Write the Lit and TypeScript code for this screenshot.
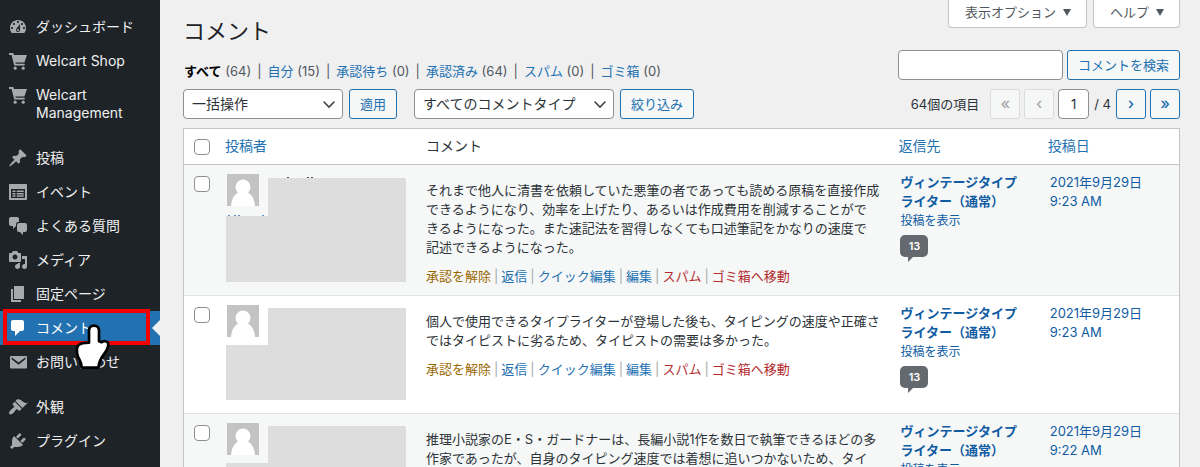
import { LitElement, html, css, svg, nothing } from "lit";
import { customElement } from "lit/decorators.js";
import { classMap } from "lit/directives/class-map.js";
import { styleMap } from "lit/directives/style-map.js";

interface MenuItem {
  label: string;
  icon: string;
  current?: boolean;
  gapBefore?: boolean;
}

interface CommentRow {
  lines: string[];
  time: string;
  maskTop: number;
  maskStep: number;
  maskBottom: number;
  traces?: boolean;
}

const ICONS: Record<string, unknown> = {
  dashboard: svg`<path d="M3.76 16h12.48c1.1-1.37 1.76-3.11 1.76-5 0-4.42-3.58-8-8-8s-8 3.58-8 8c0 1.89.66 3.63 1.76 5zM10 4c.55 0 1 .45 1 1s-.45 1-1 1-1-.45-1-1 .45-1 1-1zM6 6c.55 0 1 .45 1 1s-.45 1-1 1-1-.45-1-1 .45-1 1-1zm8 0c.55 0 1 .45 1 1s-.45 1-1 1-1-.45-1-1 .45-1 1-1zm-5.37 5.55L12 7v6c0 1.1-.9 2-2 2s-2-.9-2-2c0-.57.24-1.08.63-1.45zM4 10c.55 0 1 .45 1 1s-.45 1-1 1-1-.45-1-1 .45-1 1-1zm12 0c.55 0 1 .45 1 1s-.45 1-1 1-1-.45-1-1 .45-1 1-1zm-5 3c0-.55-.45-1-1-1s-1 .45-1 1 .45 1 1 1 1-.45 1-1z"/>`,
  cart: svg`<path d="M1 2h4.300l.6 2H19l-2.600 7.600H7.400l.3 1.100h9v1.700H6.200L3.600 3.900H1z"/><circle cx="7.200" cy="17.200" r="1.600"/><circle cx="15.200" cy="17.200" r="1.600"/>`,
  post: svg`<path d="M10.44 3.02l1.82-1.82 6.36 6.35-1.83 1.82c-1.05-.68-2.48-.57-3.41.36l-.75.75c-.92.93-1.04 2.35-.35 3.41l-1.83 1.82-2.41-2.41-2.8 2.79c-.42.42-3.38 2.71-3.8 2.29s1.86-3.39 2.28-3.81l2.79-2.79L4.1 9.36l1.83-1.82c1.05.69 2.48.57 3.4-.36l.75-.75c.93-.92 1.05-2.35.36-3.41z"/>`,
  event: svg`<path fill-rule="evenodd" d="M2 2h16c.6 0 1 .4 1 1v14c0 .6-.4 1-1 1H2c-.6 0-1-.4-1-1V3c0-.6.4-1 1-1zm1 5v9h14V7zm1.500 1.500h3v1.600h-3zm4.200 0h7v1.600h-7zm-4.200 2.400h3v1.600h-3zm4.200 0h7v1.600h-7zm-4.200 2.400h3v1.500h-3zm4.200 0h7v1.500h-7z"/>`,
  chat: svg`<path d="M11 6h-.82C9.07 6 8 7.2 8 8.16V10l-3 3v-3H3c-1.1 0-2-.9-2-2V3c0-1.1.9-2 2-2h6c1.1 0 2 .9 2 2v3zm0 1h6c1.1 0 2 .9 2 2v5c0 1.1-.9 2-2 2h-2v3l-3-3h-1c-1.1 0-2-.9-2-2V9c0-1.1.9-2 2-2z"/>`,
  media: svg`<path d="M13 11V4c0-.55-.45-1-1-1h-1.670L9 1H5L3.670 3H2c-.55 0-1 .45-1 1v7c0 .55.45 1 1 1h10c.55 0 1-.45 1-1zM7 4.500c1.380 0 2.500 1.120 2.500 2.500S8.380 9.500 7 9.500 4.500 8.380 4.500 7 5.620 4.500 7 4.500zM14 6h5v10.500c0 1.380-1.120 2.500-2.500 2.500S14 17.880 14 16.500s1.120-2.500 2.500-2.500c.17 0 .34.02.5.05V9h-3V6zm-4 8.050V13h2v3.500c0 1.380-1.120 2.500-2.500 2.500S7 17.880 7 16.500 8.120 14 9.500 14c.17 0 .34.02.5.05z"/>`,
  page: svg`<path d="M6 15V2h10v13H6zm-1 1h8v2H3V5h2v11z"/>`,
  comment: svg`<path d="M5 2h9c1.100 0 2 .9 2 2v7c0 1.100-.9 2-2 2h-2l-5 5v-5H5c-1.100 0-2-.9-2-2V4c0-1.100.9-2 2-2z"/>`,
  mail: svg`<path fill-rule="evenodd" d="M3 4h15c.6 0 1 .4 1 1v10.500c0 .6-.4 1-1 1H3c-.6 0-1-.4-1-1V5c0-.6.4-1 1-1zm.6 1.300v1.900l6.900 5.600 6.900-5.600V5.300l-6.900 5.300z"/>`,
  appearance: svg`<path d="M14.480 11.060L7.410 3.990l1.500-1.500c.5-.56 2.300-.47 3.510.32 1.210.8 1.430 1.280 2.910 2.100 1.180.64 2.450 1.260 4.450.85zm-.71.71L6.700 4.700 4.930 6.470c-.39.39-.39 1.020 0 1.410l1.060 1.060c.39.39.39 1.030 0 1.420-.6.6-1.430 1.110-2.210 1.690-.35.26-.7.53-1.010.84C1.430 14.230.4 16.080 1.400 17.070c.99 1 2.840-.03 4.180-1.360.31-.31.58-.66.85-1.020.57-.78 1.080-1.610 1.690-2.210.39-.39 1.020-.39 1.410 0l1.060 1.060c.39.39 1.020.39 1.410 0z"/>`,
  plugins: svg`<path d="M13.110 4.360L9.870 7.600 8 5.730l3.240-3.240c.35-.34 1.050-.2 1.560.32.52.51.66 1.210.31 1.550zm-8 1.770l.91-1.120 9.010 9.010-1.190.84c-.71.71-2.630 1.160-3.820 1.160H6.140L4.900 17.260c-.59.59-1.540.59-2.120 0-.59-.58-.59-1.530 0-2.120l1.240-1.240v-3.880c0-1.130.4-3.190 1.090-3.890zm7.260 3.970l3.240-3.240c.34-.35 1.040-.21 1.550.31.52.51.66 1.210.31 1.550l-3.240 3.250z"/>`,
};

const MENU: MenuItem[] = [
  { label: "ダッシュボード", icon: "dashboard" },
  { label: "Welcart Shop", icon: "cart" },
  { label: "Welcart Management", icon: "cart" },
  { label: "投稿", icon: "post", gapBefore: true },
  { label: "イベント", icon: "event" },
  { label: "よくある質問", icon: "chat" },
  { label: "メディア", icon: "media" },
  { label: "固定ページ", icon: "page" },
  { label: "コメント", icon: "comment", current: true },
  { label: "お問い合わせ", icon: "mail" },
  { label: "外観", icon: "appearance", gapBefore: true },
  { label: "プラグイン", icon: "plugins" },
];

const VIEWS: [string, number][] = [
  ["すべて", 64],
  ["自分", 15],
  ["承認待ち", 0],
  ["承認済み", 64],
  ["スパム", 0],
  ["ゴミ箱", 0],
];

const ACTIONS: [string, string][] = [
  ["承認を解除", "unapprove"],
  ["返信", ""],
  ["クイック編集", ""],
  ["編集", ""],
  ["スパム", "danger"],
  ["ゴミ箱へ移動", "danger"],
];

const COMMENTS: CommentRow[] = [
  {
    lines: [
      "それまで他人に清書を依頼していた悪筆の者であっても読める原稿を直接作成",
      "できるようになり、効率を上げたり、あるいは作成費用を削減することがで",
      "きるようになった。また速記法を習得しなくても口述筆記をかなりの速度で",
      "記述できるようになった。",
    ],
    time: "9:23 AM",
    maskTop: 4,
    maskStep: 42,
    maskBottom: 66,
    traces: true,
  },
  {
    lines: [
      "個人で使用できるタイプライターが登場した後も、タイピングの速度や正確さ",
      "ではタイピストに劣るため、タイピストの需要は多かった。",
    ],
    time: "9:23 AM",
    maskTop: 3,
    maskStep: 40,
    maskBottom: 55,
  },
  {
    lines: [
      "推理小説家のE・S・ガードナーは、長編小説1作を数日で執筆できるほどの多",
      "作家であったが、自身のタイピング速度では着想に追いつかないため、タイ",
    ],
    time: "9:22 AM",
    maskTop: 3,
    maskStep: 40,
    maskBottom: 55,
  },
];

@customElement("admin-menu")
export class AdminMenu extends LitElement {
  static styles = css`
    :host {
      display: block;
      flex: none;
      width: 160px;
      background: #1d2327;
    }
    ul {
      list-style: none;
      margin: 0;
      padding: 10px 0 0;
    }
    li {
      position: relative;
    }
    .gap {
      margin-top: 11px;
    }
    a {
      display: flex;
      color: #f0f0f1;
      text-decoration: none;
      font-size: 14px;
      line-height: 18px;
    }
    .icon {
      flex: none;
      width: 20px;
      height: 20px;
      margin: 7px 8px;
      fill: #a7aaad;
    }
    .label {
      padding: 8px 8px 8px 0;
    }
    .current a {
      background: #2271b1;
      color: #fff;
    }
    .current .icon {
      fill: #fff;
    }
    .current::after {
      content: "";
      position: absolute;
      right: 0;
      top: 9px;
      border: 8px solid transparent;
      border-right-color: #f0f0f1;
      border-left-width: 0;
    }
    .marker {
      position: absolute;
      z-index: 1;
      left: 3px;
      right: 10px;
      top: -2px;
      bottom: 0;
      border: 4px solid #f40000;
    }
    .hand {
      position: absolute;
      z-index: 2;
      left: 75px;
      top: 12px;
      width: 36px;
      height: 47px;
    }
  `;

  render() {
    return html`<nav>
      <ul>
        ${MENU.map(
          (item) => html`<li class=${classMap({ current: !!item.current, gap: !!item.gapBefore })}>
            <a href="#">
              <svg class="icon" viewBox="0 0 20 20" aria-hidden="true">${ICONS[item.icon]}</svg>
              <span class="label">${item.label}</span>
            </a>
            ${item.current
              ? html`<span class="marker"></span>
                  <svg class="hand" viewBox="225 69 108 141" aria-hidden="true">
                    <path
                      fill="#fff"
                      stroke="#000"
                      stroke-width="8"
                      stroke-linejoin="round"
                      d="M267 91C267 72 297 72 297 91V124L305 127C309 121 324 123 325 132C325 142 318 155 310 165C300 178 297 187 296 198C296 201 294 203 291 203H249C246 203 244 201 244 198C245 185 237 180 233 167C230 155 229 143 235 136C243 129 255 128 267 128Z"
                    />
                  </svg>`
              : nothing}
          </li>`
        )}
      </ul>
    </nav>`;
  }
}

@customElement("comments-screen")
export class CommentsScreen extends LitElement {
  static styles = css`
    :host {
      display: block;
      flex: 1;
      min-width: 0;
      padding: 0 20px 0 23px;
      background: #f0f0f1;
      color: #2c3338;
      font-size: 13px;
      line-height: 19px;
    }
    a {
      color: #2271b1;
      text-decoration: none;
    }
    button,
    input,
    select {
      box-sizing: border-box;
      margin: 0;
      font: inherit;
    }
    .head,
    .bar,
    .tabs,
    .group,
    .pages {
      display: flex;
    }
    .head,
    .bar {
      justify-content: space-between;
      align-items: flex-start;
    }
    .head {
      height: 50px;
    }
    h1 {
      margin: 0;
      padding-top: 16px;
      font-size: 22px;
      line-height: 30px;
      font-weight: 400;
      color: #1d2327;
    }
    .tabs {
      gap: 6px;
    }
    .tab {
      display: flex;
      align-items: center;
      gap: 7px;
      height: 28px;
      padding: 0 15px 2px 16px;
      border: 1px solid #c3c4c7;
      border-top: 0;
      border-radius: 0 0 4px 4px;
      background: #fff;
      color: #50575e;
    }
    .caret {
      width: 8px;
      height: 7px;
      fill: #50575e;
    }
    .bar {
      height: 30px;
      margin-bottom: 9px;
    }
    .views {
      display: flex;
      list-style: none;
      margin: 0;
      padding: 12px 0 0 1px;
      color: #50575e;
    }
    .views li + li::before {
      content: "|";
      padding: 0 6px;
    }
    .views .all {
      color: #000;
      font-weight: 700;
    }
    .group {
      gap: 6px;
    }
    .group + .group {
      margin-left: 17px;
    }
    .filters {
      display: flex;
    }
    .search {
      display: flex;
      gap: 4px;
    }
    .field {
      height: 30px;
      border: 1px solid #8c8f94;
      border-radius: 4px;
      background: #fff;
      color: #2c3338;
    }
    .query {
      width: 165px;
      padding: 0 8px;
    }
    .btn {
      height: 30px;
      padding: 0 10px;
      border: 1px solid #2271b1;
      border-radius: 3px;
      background: #f6f7f7;
      color: #2271b1;
      white-space: nowrap;
    }
    .picker {
      display: grid;
      align-items: center;
    }
    .picker > * {
      grid-area: 1 / 1;
    }
    .picker select {
      appearance: none;
      padding: 0 24px 2px 8px;
      font-size: 14px;
    }
    .bulk select {
      width: 160px;
    }
    .kind select {
      width: 200px;
    }
    .chevron {
      justify-self: end;
      width: 12px;
      height: 8px;
      margin: 1px 8px 0 0;
      fill: none;
      stroke: #3c434a;
      stroke-width: 1.6;
      stroke-linecap: round;
      pointer-events: none;
    }
    .pages {
      align-items: center;
      gap: 4px;
    }
    .total {
      margin-right: 7px;
    }
    .step {
      width: 30px;
      padding: 0 0 2px;
      font-size: 16px;
      font-weight: 500;
    }
    .step:disabled {
      border-color: #dcdcde;
      color: #a7aaad;
    }
    .page {
      width: 31px;
      padding: 0;
      text-align: center;
    }
    .of {
      padding: 0 1px;
    }
    table {
      width: 100%;
      table-layout: fixed;
      border: 1px solid #c3c4c7;
      border-spacing: 0;
      background: #fff;
    }
    th {
      padding: 7px 8px 9px;
      text-align: left;
      font-weight: 400;
      font-size: 14px;
      border-bottom: 1px solid #c3c4c7;
    }
    td {
      padding: 8px 10px 7px;
      vertical-align: top;
    }
    tbody tr:nth-child(odd) {
      background: #f6f7f7;
    }
    tbody tr + tr td {
      border-top: 1px solid #e1e2e3;
    }
    .c-check {
      width: 33px;
      box-sizing: border-box;
      padding-left: 10px;
      padding-right: 0;
    }
    .c-author {
      width: 20%;
      box-sizing: border-box;
    }
    .c-comment {
      padding-left: 10px;
      padding-right: 0;
    }
    .c-reply {
      width: 15%;
      box-sizing: border-box;
    }
    .c-date {
      width: 14%;
      box-sizing: border-box;
    }
    .check {
      display: block;
      appearance: none;
      width: 16px;
      height: 16px;
      margin-top: 3px;
      border: 1px solid #8c8f94;
      border-radius: 4px;
      background: #fff;
    }
    .who {
      display: grid;
      grid-template-columns: 42px 1fr;
      margin: 1px 0 6px -1px;
    }
    .avatar {
      width: 32px;
      height: 32px;
      margin-left: 1px;
    }
    .mask {
      position: relative;
      background: #ddd;
    }
    .mask.low {
      grid-column: 1 / 3;
    }
    .traced .mask::before {
      content: "";
      position: absolute;
      top: -1px;
      left: 19px;
      width: 2px;
      height: 1px;
      color: #50575e;
      background: currentColor;
      box-shadow: 20px 0, 24px 0;
    }
    .traced .low::before {
      left: 2px;
      color: #5c93c2;
      box-shadow: 6px 0, 10px 0, 34px 0;
    }
    .text {
      margin: 8px 0 10px;
      white-space: nowrap;
    }
    .actions {
      color: #a7aaad;
      white-space: nowrap;
    }
    .actions a + a::before {
      content: "|";
      padding: 0 3px;
      color: #a7aaad;
    }
    .unapprove {
      color: #996800;
    }
    .danger {
      color: #b32d2e;
    }
    .c-reply a,
    .c-date a {
      color: #0f5ca3;
    }
    th a,
    th.c-reply a,
    th.c-date a {
      color: #2271b1;
    }
    .target {
      display: block;
      font-weight: 700;
    }
    .show {
      display: block;
      font-size: 12px;
    }
    .bubble {
      display: block;
      position: relative;
      width: 28px;
      margin-top: 5px;
      border-radius: 5px;
      background: #646970;
      font-size: 11px;
      font-weight: 600;
      line-height: 22px;
      text-align: center;
    }
    .c-reply .bubble {
      color: #fff;
    }
    .bubble::after {
      content: "";
      position: absolute;
      left: 8px;
      top: 22px;
      border-top: 5px solid #646970;
      border-right: 5px solid transparent;
    }
  `;

  private row(c: CommentRow, i: number) {
    return html`<tr>
      <td class="c-check"><input class="check" type="checkbox" aria-label=${`コメント ${i + 1} を選択`} /></td>
      <td class="c-author">
        <div
          class=${classMap({ who: true, traced: !!c.traces })}
          style=${styleMap({ gridTemplateRows: `${c.maskStep}px ${c.maskBottom}px` })}
        >
          <svg class="avatar" viewBox="0 0 32 32" aria-hidden="true">
            <path fill="#c3c3c3" d="M0 0h32v32H0z" />
            <circle cx="16" cy="13" r="7.500" fill="#fff" />
            <path fill="#fff" d="M4 32c.5-7.500 4-13 9-14h6c5 1 8.500 6.500 9 14z" />
          </svg>
          <div class="mask" style=${styleMap({ marginTop: `${c.maskTop}px` })}></div>
          <div class="mask low"></div>
        </div>
      </td>
      <td class="c-comment">
        <p class="text">${c.lines.map((line, n) => html`${n ? html`<br />` : nothing}${line}`)}</p>
        <div class="actions">
          ${ACTIONS.map(([label, kind]) => html`<a href="#" class=${kind}>${label}</a>`)}
        </div>
      </td>
      <td class="c-reply">
        <a class="target" href="#">ヴィンテージタイプライター（通常）</a>
        <a class="show" href="#">投稿を表示</a>
        <a class="bubble" href="#">13</a>
      </td>
      <td class="c-date"><a href="#">2021年9月29日<br />${c.time}</a></td>
    </tr>`;
  }

  private chevron() {
    return html`<svg class="chevron" viewBox="0 0 12 8" aria-hidden="true"><path d="M1 1l5 5 5-5" /></svg>`;
  }

  render() {
    const caret = html`<svg class="caret" viewBox="0 0 8 7" aria-hidden="true"><path d="M0 0h8L4 7z" /></svg>`;
    return html`
      <header class="head">
        <h1>コメント</h1>
        <div class="tabs">
          <button class="tab" type="button">表示オプション ${caret}</button>
          <button class="tab" type="button">ヘルプ ${caret}</button>
        </div>
      </header>
      <div class="bar">
        <ul class="views">
          ${VIEWS.map(
            ([label, count], i) =>
              html`<li><a href="#" class=${classMap({ all: i === 0 })}>${label}</a> (${count})</li>`
          )}
        </ul>
        <div class="search">
          <input class="field query" type="search" aria-label="コメントを検索" />
          <button class="btn" type="button">コメントを検索</button>
        </div>
      </div>
      <div class="bar">
        <div class="filters">
          <div class="group">
            <label class="picker bulk">
              <select class="field" aria-label="一括操作を選択">
                <option>一括操作</option>
              </select>
              ${this.chevron()}
            </label>
            <button class="btn" type="button">適用</button>
          </div>
          <div class="group">
            <label class="picker kind">
              <select class="field" aria-label="コメントタイプで絞り込む">
                <option>すべてのコメントタイプ</option>
              </select>
              ${this.chevron()}
            </label>
            <button class="btn" type="button">絞り込み</button>
          </div>
        </div>
        <div class="pages">
          <span class="total">64個の項目</span>
          <button class="btn step" type="button" disabled>«</button>
          <button class="btn step" type="button" disabled>‹</button>
          <input class="field page" type="text" value="1" aria-label="現在のページ" />
          <span class="of">/ 4</span>
          <button class="btn step" type="button">›</button>
          <button class="btn step" type="button">»</button>
        </div>
      </div>
      <table>
        <thead>
          <tr>
            <th class="c-check"><input class="check" type="checkbox" aria-label="すべて選択" /></th>
            <th class="c-author"><a href="#">投稿者</a></th>
            <th class="c-comment">コメント</th>
            <th class="c-reply"><a href="#">返信先</a></th>
            <th class="c-date"><a href="#">投稿日</a></th>
          </tr>
        </thead>
        <tbody>
          ${COMMENTS.map((c, i) => this.row(c, i))}
        </tbody>
      </table>
    `;
  }
}

@customElement("app-root")
export class AppRoot extends LitElement {
  static styles = css`
    :host {
      display: flex;
      height: 100vh;
      overflow: hidden;
      font-family: Inter, "Noto Sans CJK JP", sans-serif;
    }
  `;

  render() {
    return html`<admin-menu></admin-menu><comments-screen></comments-screen>`;
  }
}
